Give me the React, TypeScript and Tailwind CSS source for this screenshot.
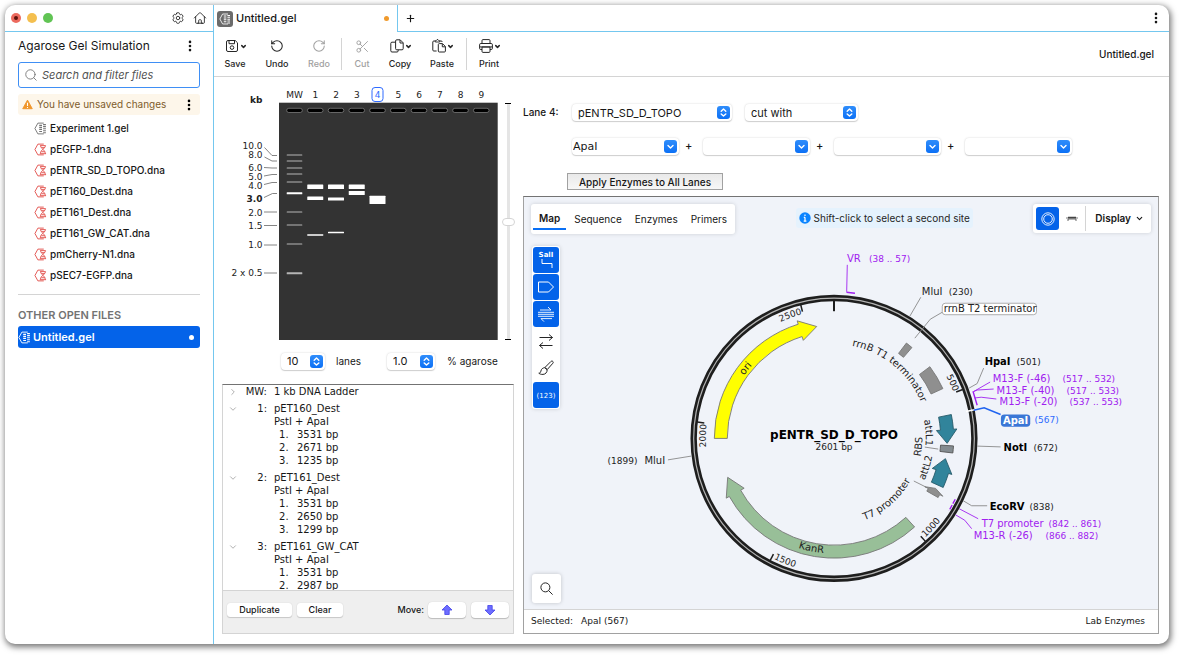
import type { ReactNode } from "react";
import { ChevronDown, ChevronRight, MoreVertical, Plus, RotateCcw, RotateCw, Scissors, Search } from "lucide-react";
import { HiOutlineCog6Tooth, HiOutlineHome } from "react-icons/hi2";

const FILES = [
  { name: "Experiment 1.gel", kind: "gel" },
  { name: "pEGFP-1.dna", kind: "dna" },
  { name: "pENTR_SD_D_TOPO.dna", kind: "dna" },
  { name: "pET160_Dest.dna", kind: "dna" },
  { name: "pET161_Dest.dna", kind: "dna" },
  { name: "pET161_GW_CAT.dna", kind: "dna" },
  { name: "pmCherry-N1.dna", kind: "dna" },
  { name: "pSEC7-EGFP.dna", kind: "dna" },
];

const LANES = [
  { id: 1, name: "pET160_Dest", fragments: [3531, 2671, 1235] },
  { id: 2, name: "pET161_Dest", fragments: [3531, 2650, 1299] },
  { id: 3, name: "pET161_GW_CAT", fragments: [3531, 2987] },
];

const LADDER = [
  { label: "10.0", text: 149, band: 155, lead: "M264.5 147.5L272 155.5H277" },
  { label: "8.0", text: 158, band: 161, lead: "M264.5 157L272 161H277" },
  { label: "6.0", text: 171, band: 168, lead: "M264 167.5L272 168H277" },
  { label: "5.0", text: 180, band: 174, lead: "M264 176L272 174.5H277" },
  { label: "4.0", text: 189, band: 182, lead: "M264 184.5L272 182.5H277" },
  { label: "3.0", text: 202, band: 193, lead: "M264 197.5L272.5 193.5H277", bold: true },
  { label: "2.0", text: 216, band: 212, lead: "M264 212H277" },
  { label: "1.5", text: 229, band: 225, lead: "M264 225.5H277" },
  { label: "1.0", text: 248, band: 244, lead: "M264 245H277" },
  { label: "2 x 0.5", text: 276, band: 273, lead: "M264 273H277", bright: true },
];

const BANDS = [
  { lane: 1, y: 184.5, h: 4.5 },
  { lane: 1, y: 196.5, h: 3.5 },
  { lane: 1, y: 234, h: 2, dim: true },
  { lane: 2, y: 184.5, h: 4.5 },
  { lane: 2, y: 197.5, h: 3 },
  { lane: 2, y: 231.7, h: 1.6 },
  { lane: 3, y: 184.5, h: 4.5 },
  { lane: 3, y: 191, h: 4 },
  { lane: 4, y: 195.7, h: 8.4 },
];

const laneX = (lane: number) => 294.5 + lane * 20.75;

// Plasmid geometry: angles in degrees, clockwise from twelve o'clock.
const CX = 834;
const CY = 439;
const LENGTH = 2601;

const toAngle = (bp: number) => (bp / LENGTH) * 360;

function pt(angle: number, r: number) {
  const a = (angle * Math.PI) / 180;
  return `${(CX + r * Math.sin(a)).toFixed(2)} ${(CY - r * Math.cos(a)).toFixed(2)}`;
}

function arc(from: number, to: number, r: number) {
  const large = Math.abs(to - from) > 180 ? 1 : 0;
  return `M${pt(from, r)}A${r} ${r} 0 ${large} ${to > from ? 1 : 0} ${pt(to, r)}`;
}

function block(from: number, to: number, inner = 107, outer = 120) {
  return `${arc(from, to, outer)}L${pt(to, inner)}A${inner} ${inner} 0 0 ${to > from ? 0 : 1} ${pt(from, inner)}Z`;
}

function arrow(from: number, neck: number, tip: number) {
  const sweep = tip > from ? 1 : 0;
  return [
    arc(from, neck, 120),
    `L${pt(neck, 123.5)}L${pt(tip, 113.5)}L${pt(neck, 103)}L${pt(neck, 107)}`,
    `A107 107 0 0 ${1 - sweep} ${pt(from, 107)}Z`,
  ].join("");
}

function IconHexFile({ kind, className }: { kind: string; className?: string }) {
  return (
    <svg viewBox="0 0 14 14" className={className} fill="none" stroke="currentColor" strokeWidth="1">
      <path d="M10.5 1.2H4.2L1 7l3.2 5.8h6.3" />
      {kind === "gel" ? (
        <path d="M5.6 3.6h3M5.6 5.8h3M5.6 8h3M5.6 10.2h3M9.8 2.8h3M9.8 5h3M9.8 7.2h3M9.8 9.4h3M9.8 11.6h3" strokeWidth="1.2" />
      ) : (
        <path d="M6.6 2.8h6M7 3c.3 3.6 5.3 4.4 5.3 8.4M12.4 3C12 6.4 7 7.1 6.8 11.2M6.4 11.5H13M8.2 5h3.4M8 9.4h3.6" />
      )}
    </svg>
  );
}

function IconSave() {
  return (
    <svg viewBox="0 0 16 16" className="size-4" fill="none" stroke="currentColor">
      <path d="M2.5 4A1.5 1.5 0 0 1 4 2.500h7.200l2.300 2.300V12a1.500 1.500 0 0 1-1.500 1.500H4A1.500 1.500 0 0 1 2.500 12z" />
      <path d="M5 2.7v3h5.500v-3" />
      <circle cx="8" cy="9.6" r="1.8" />
    </svg>
  );
}

function IconCopy() {
  return (
    <svg viewBox="0 0 16 16" className="size-4" fill="none" stroke="currentColor">
      <path d="M6.5 4.2H3A1.2 1.2 0 0 0 1.8 5.400v7.400A1.200 1.200 0 0 0 3 14h5a1.200 1.200 0 0 0 1.200-1.200v-1" />
      <path d="M6.6 3a1.200 1.200 0 0 1 1.200-1.200h3.400l3 3v5.800a1.200 1.200 0 0 1-1.200 1.200H7.800a1.200 1.200 0 0 1-1.200-1.200z" />
      <path d="M11 2v3h3" />
    </svg>
  );
}

function IconPaste() {
  return (
    <svg viewBox="0 0 16 16" className="size-4" fill="none" stroke="currentColor">
      <path d="M5.600 13H2.800a1 1 0 0 1-1-1V4a1 1 0 0 1 1-1H4M9 3h1.200a1 1 0 0 1 1 1" />
      <path d="M4.300 4V2.600h1L6 1.600h1l.7 1h1V4z" strokeWidth="0.9" />
      <path d="M7.300 6.600a1 1 0 0 1 1-1h3.200l2.900 2.900V13a1 1 0 0 1-1 1H8.300a1 1 0 0 1-1-1z" />
      <path d="M11.300 5.800v3h3" />
    </svg>
  );
}

function IconPrint() {
  return (
    <svg viewBox="0 0 16 16" className="size-4" fill="none" stroke="currentColor">
      <path d="M4 5.300V2.600a1 1 0 0 1 1-1h6a1 1 0 0 1 1 1v2.700" />
      <path d="M4 11.500H2.800a1.200 1.200 0 0 1-1.200-1.200V6.700a1.200 1.200 0 0 1 1.200-1.200h10.400a1.200 1.200 0 0 1 1.200 1.200v3.600a1.200 1.200 0 0 1-1.200 1.200H12" />
      <path d="M4 9h8v4.400a1 1 0 0 1-1 1H5a1 1 0 0 1-1-1zM2 8.900h12" />
    </svg>
  );
}

type ToolButtonProps = { label: string; icon: ReactNode; menu?: boolean; disabled?: boolean; width?: string };

function ToolButton({ label, icon, menu, disabled, width = "w-[42px]" }: ToolButtonProps) {
  return (
    <button disabled={disabled} className={`flex shrink-0 flex-col items-center gap-1 text-[9px] leading-3 font-medium text-neutral-800 disabled:text-neutral-400 ${width}`}>
      <span className="flex h-4 items-center">
        {icon}
        {menu && <ChevronDown className="size-[7px]" strokeWidth={5} />}
      </span>
      {label}
    </button>
  );
}

type MacSelectProps = { label: string; id?: string; options: string[]; combo?: boolean; className: string };

function MacSelect({ label, id, options, combo, className }: MacSelectProps) {
  return (
    <span className={`relative flex h-[17px] rounded bg-white shadow-[0_0_2px_rgba(0,0,0,0.18),0_1px_1px_rgba(0,0,0,0.15)] ${className}`}>
      <select id={id} aria-label={label} className={`h-full w-full appearance-none rounded bg-transparent pr-4 text-[11px] leading-4 outline-none ${combo ? "pl-px" : "pl-[6px]"}`}>
        {options.map((option) => (
          <option key={option}>{option}</option>
        ))}
      </select>
      <span className="pointer-events-none absolute top-[2px] right-[2px] flex size-[13px] items-center justify-center rounded-[3px] bg-gradient-to-b from-[#2f8dfb] to-[#0a70f5] text-white">
        <svg viewBox="0 0 13 13" className="size-[13px]" fill="none" stroke="currentColor" strokeWidth="1.4" strokeLinecap="round" strokeLinejoin="round">
          <path d={combo ? "M4 5.5L6.5 8L9 5.5" : "M4.2 5.2L6.5 3L8.8 5.2M4.2 7.9L6.5 10.1L8.8 7.9"} />
        </svg>
      </span>
    </span>
  );
}

function Sidebar() {
  return (
    <aside className="flex w-[209px] shrink-0 flex-col border-r border-[#74c7ef]">
      <div className="flex h-[27px] shrink-0 items-center border-b border-[#74c7ef] px-[6px]">
        <div className="flex flex-1 gap-[6px]">
          <span className="flex size-[10px] items-center justify-center rounded-full bg-[#ec6a5e]">
            <span className="size-1 rounded-full bg-[#5c120c]" />
          </span>
          <span className="size-[10px] rounded-full bg-[#f4bf4f]" />
          <span className="size-[10px] rounded-full bg-[#61c454]" />
        </div>
        <div className="flex gap-2 text-neutral-800">
          <button aria-label="Settings"><HiOutlineCog6Tooth className="size-[14px]" /></button>
          <button aria-label="Home"><HiOutlineHome className="size-[14px]" /></button>
        </div>
      </div>

      <div className="flex flex-col px-[13px] pt-1">
        <div className="flex h-5 items-center justify-between">
          <h1 className="text-xs whitespace-nowrap">Agarose Gel Simulation</h1>
          <button aria-label="Collection menu" className="mr-[3px]"><MoreVertical className="size-[14px]" strokeWidth={2.5} /></button>
        </div>
        <label className="mt-[6px] flex h-[26px] items-center gap-1 rounded-[3px] border border-[#3f8ff5] px-[5px]">
          <Search className="size-[14px] shrink-0 text-neutral-500" strokeWidth={1.5} />
          <input type="search" aria-label="Search and filter files" placeholder="Search and filter files" className="w-full min-w-0 text-[11px] italic outline-none placeholder:text-neutral-600" />
        </label>
        <div className="mt-[6px] flex h-[21px] items-center gap-1 rounded-[3px] bg-[#fdf6ea] px-1 text-[10px] text-[#7d5c2c]">
          <svg viewBox="0 0 12 12" className="size-[11px] shrink-0">
            <path d="M6 1.2L11.2 10.6H.8z" fill="#f0962b" stroke="#f0962b" strokeLinejoin="round" />
            <path d="M6 4.2v3.4M6 8.600v1.200" stroke="#fff" strokeWidth="1.2" />
          </svg>
          <span className="flex-1 whitespace-nowrap">You have unsaved changes</span>
          <button aria-label="Unsaved changes menu" className="text-black"><MoreVertical className="size-[14px]" strokeWidth={2.5} /></button>
        </div>
        <ul className="mt-[3px] text-[10px] font-medium">
          {FILES.map((file) => (
            <li key={file.name}>
              <a href="#" className="flex h-[21px] items-center gap-[3px] pl-4 whitespace-nowrap">
                <IconHexFile kind={file.kind} className={`size-[13px] ${file.kind === "gel" ? "text-neutral-500" : "text-[#e2504c]"}`} />
                {file.name}
              </a>
            </li>
          ))}
        </ul>
        <hr className="mt-2 border-neutral-300" />
        <h2 className="mt-3 text-[11px] leading-4 font-semibold text-neutral-500">OTHER OPEN FILES</h2>
        <a href="#" className="mt-[3px] flex h-[22px] items-center gap-[2px] rounded-[3px] bg-[#0463e9] pr-[6px] text-[11px] font-semibold text-white">
          <IconHexFile kind="gel" className="size-[13px]" />
          <span className="flex-1">Untitled.gel</span>
          <span className="size-[5px] rounded-full bg-white" />
        </a>
      </div>
    </aside>
  );
}

function TopBar() {
  return (
    <>
      <div className="flex h-[27px] shrink-0">
        <div className="flex w-[184px] items-center gap-[3px] border-r border-[#74c7ef] pr-2 pl-[3px] text-[11px] font-medium">
          <span className="flex size-4 items-center justify-center rounded-[3px] bg-[#6b6b6b] text-white">
            <IconHexFile kind="gel" className="size-3" />
          </span>
          <span className="flex-1">Untitled.gel</span>
          <span className="size-[5px] rounded-full bg-[#f09a2c]" />
        </div>
        <div className="flex flex-1 items-center justify-between border-b border-[#74c7ef] pr-[6px] pl-[7px]">
          <button aria-label="New tab"><Plus className="size-[11px]" strokeWidth={2.5} /></button>
          <button aria-label="Window menu"><MoreVertical className="size-[14px]" strokeWidth={2.5} /></button>
        </div>
      </div>
      <div className="flex h-[45px] shrink-0 items-center border-b border-neutral-300">
        <ToolButton label="Save" icon={<IconSave />} menu />
        <ToolButton label="Undo" icon={<RotateCcw className="size-[14px]" strokeWidth={1.8} />} />
        <ToolButton label="Redo" icon={<RotateCw className="size-[14px]" strokeWidth={1.8} />} disabled />
        <span className="mx-px h-8 w-px bg-neutral-300" />
        <ToolButton label="Cut" icon={<Scissors className="size-[15px]" strokeWidth={1.5} />} disabled width="w-[38px]" />
        <ToolButton label="Copy" icon={<IconCopy />} menu width="w-[38px]" />
        <ToolButton label="Paste" icon={<IconPaste />} menu width="w-[46px]" />
        <span className="mx-px h-8 w-px bg-neutral-300" />
        <ToolButton label="Print" icon={<IconPrint />} menu />
        <span className="flex-1 pr-[15px] text-right text-[10px] font-medium">Untitled.gel</span>
      </div>
    </>
  );
}

function Gel() {
  return (
    <svg viewBox="222 84 276 256" className="h-[256px] w-[276px] shrink-0 font-['DejaVu_Sans'] text-[9px]" fill="#222">
      <rect x="279" y="102.7" width="218.7" height="237.3" fill="#333" />
      <text x="262.5" y="103" textAnchor="end" fontWeight="bold">kb</text>
      <text x="294.5" y="98" textAnchor="middle">MW</text>
      <rect x="372" y="87.5" width="11" height="14" rx="3" fill="#fff" stroke="#2f6bff" />
      {[1, 2, 3, 4, 5, 6, 7, 8, 9].map((lane) => (
        <text key={lane} x={laneX(lane)} y="98" textAnchor="middle" fill={lane === 4 ? "#2f6bff" : "#222"}>{lane}</text>
      ))}
      {[0, 1, 2, 3, 4, 5, 6, 7, 8, 9].map((lane) => (
        <rect key={lane} x={laneX(lane) - 7.8} y="108.3" width="15.6" height="4.2" rx="2.1" fill="#000" stroke="#888" strokeWidth="0.7" />
      ))}
      {LADDER.map((step) => (
        <g key={step.label}>
          <text x="262.5" y={step.text} textAnchor="end" fontWeight={step.bold ? "bold" : "normal"}>{step.label}</text>
          <path d={step.lead} fill="none" stroke="#666" strokeWidth="0.8" />
          <rect
            x={laneX(0) - 7.8}
            y={step.band - 0.8}
            width="15.6"
            height={step.bold || step.bright ? 2 : 1.6}
            rx="0.5"
            fill={step.bold ? "#fff" : step.bright ? "#b5b5b5" : "#8a8a8a"}
          />
        </g>
      ))}
      {BANDS.map((band) => (
        <rect key={`${band.lane}-${band.y}`} x={laneX(band.lane) - 8} y={band.y} width="16" height={band.h} rx="0.5" fill={band.dim ? "#ccc" : "#fff"} />
      ))}
    </svg>
  );
}

function LaneList() {
  return (
    <div className="flex min-h-0 flex-1 flex-col border border-neutral-300 border-t-neutral-500">
      <div className="min-h-0 flex-1 overflow-hidden font-['DejaVu_Sans'] text-[10px] leading-[13px] whitespace-nowrap">
        <div className="flex">
          <button aria-label="Expand MW" className="flex w-5 items-center justify-center text-neutral-400"><ChevronRight className="size-[10px]" /></button>
          <span className="w-6 text-right">MW:</span>
          <span className="pl-[7px]">1 kb DNA Ladder</span>
        </div>
        {LANES.map((lane) => (
          <div key={lane.id} className="mt-1 flex items-start">
            <button aria-label={`Collapse lane ${lane.id}`} className="flex h-[13px] w-5 items-center justify-center text-neutral-400"><ChevronDown className="size-[10px]" /></button>
            <span className="w-6 text-right">{lane.id}:</span>
            <div className="pl-[7px]">
              <p>{lane.name}</p>
              <p>PstI + ApaI</p>
              <ol>
                {lane.fragments.map((bp, i) => (
                  <li key={bp} className="flex pl-[5px]">
                    <span className="w-[18px]">{i + 1}.</span>
                    {bp} bp
                  </li>
                ))}
              </ol>
            </div>
          </div>
        ))}
      </div>
      <div className="flex h-[43px] shrink-0 items-center border-t border-neutral-300 bg-[#efefef] px-1 pb-1 text-[9px] font-medium">
        <button className="h-[14px] w-[65px] rounded-[3px] bg-white shadow-[0_0_1px_rgba(0,0,0,0.2),0_1px_1px_rgba(0,0,0,0.15)]">Duplicate</button>
        <button className="ml-[5px] h-[14px] w-[46px] rounded-[3px] bg-white shadow-[0_0_1px_rgba(0,0,0,0.2),0_1px_1px_rgba(0,0,0,0.15)]">Clear</button>
        <span className="mr-1 ml-auto">Move:</span>
        {["up", "down"].map((dir) => (
          <button key={dir} aria-label={`Move ${dir}`} className="mr-[5px] flex h-4 w-[38px] items-center justify-center rounded bg-white shadow-[0_0_1px_rgba(0,0,0,0.2),0_1px_1px_rgba(0,0,0,0.2)] last:mr-0">
            <svg viewBox="0 0 12 12" className={dir === "up" ? "size-3" : "size-3 rotate-180"}>
              <path d="M6 1L11 6H8.200V10.500H3.800V6H1z" fill="#6d6dff" stroke="#4343e8" strokeWidth="0.8" />
            </svg>
          </button>
        ))}
      </div>
    </div>
  );
}

const ARC_LABELS = [
  { id: "t1", text: "rrnB T1 terminator", d: arc(11, 90, 94.5), feature: true },
  { id: "attl1", text: "attL1", d: arc(78.5, 120, 92), feature: true },
  { id: "rbs", text: "RBS", d: arc(102, 60, 88.5), feature: true },
  { id: "attl2", text: "attL2", d: arc(115, 70, 100), feature: true },
  { id: "t7", text: "T7 promoter", d: arc(159.5, 90, 87.5), feature: true },
  { id: "ori", text: "ori", d: arc(305, 340, 110), feature: true },
  { id: "kanr", text: "KanR", d: arc(198, 150, 115.5), feature: true },
  { id: "k10", text: "1000", d: arc(toAngle(1000) - 1, 90, 135) },
  { id: "k15", text: "1500", d: arc(toAngle(1500) - 1, 150, 135) },
];

const TOP_TICK_LABELS = [
  { id: "k5", text: "500", d: arc(30, toAngle(500) - 0.5, 128.5) },
  { id: "k20", text: "2000", d: arc(240, toAngle(2000) - 0.5, 128.5) },
  { id: "k25", text: "2500", d: arc(300, toAngle(2500) - 0.5, 128.5) },
];

const SITES = [
  { name: "MluI", pos: "(230)", x: 922, px: 949, y: 295, lead: "M921 297.5L910 316.5" },
  { name: "HpaI", pos: "(501)", x: 985, px: 1017, y: 365, bold: true, lead: "M984 368.5L977.5 384L969.5 388.5" },
  { name: "NotI", pos: "(672)", x: 1004, px: 1034, y: 452, bold: true, lead: "M977.5 446.7L1001 447.5" },
  { name: "EcoRV", pos: "(838)", x: 990, px: 1030, y: 511, bold: true, lead: "M963.5 501.5L972 506.5H987.5" },
  { name: "MluI", pos: "(1899)", x: 644, px: 607, y: 465, lead: "M667.5 460.5L691 456.7" },
];

const PRIMERS = [
  { name: "VR", pos: "(38 .. 57)", x: 847, px: 869, y: 262, lead: "M847.3 265L846.7 292" },
  { name: "M13-F (-46)", pos: "(517 .. 532)", x: 993, px: 1063, y: 382, lead: "M990.5 382.5L974 392" },
  { name: "M13-F (-40)", pos: "(517 .. 533)", x: 997, px: 1067, y: 394, lead: "M994 389.5L977.5 390.5L974 392" },
  { name: "M13-F (-20)", pos: "(537 .. 553)", x: 1000, px: 1070, y: 406, lead: "M996.7 399.5L981.5 397.7L975 398.5" },
  { name: "T7 promoter", pos: "(842 .. 861)", x: 982, px: 1049, y: 528, lead: "M959.5 509.5L978.5 519.5" },
  { name: "M13-R (-26)", pos: "(866 .. 882)", x: 974, px: 1046, y: 540, lead: "M956 515.7L965 521L972 529.5" },
];

function PlasmidMap() {
  return (
    <svg viewBox="524 197 634 413" className="h-full w-full font-['DejaVu_Sans'] text-[9px]" fill="#222">
      <circle cx={CX} cy={CY} r="140.7" fill="none" stroke="#1e1e1e" strokeWidth="6.4" />
      <circle cx={CX} cy={CY} r="140.7" fill="none" stroke="#b4b4b4" strokeWidth="1.2" />
      <path d={`M${pt(toAngle(567), 135)}L${pt(toAngle(567), 146)}`} stroke="#fff" strokeWidth="1.6" />
      <path d={`M${pt(0, 138)}L${pt(0, 127.5)}`} stroke="#1e1e1e" strokeWidth="2" />
      {[500, 1000, 1500, 2000, 2500].map((bp) => (
        <path key={bp} d={`M${pt(toAngle(bp), 138)}L${pt(toAngle(bp), 131)}`} stroke="#1e1e1e" strokeWidth="1.5" />
      ))}

      <g strokeWidth="0.9" stroke="#777">
        <path d={arrow(270, 342.6, 351.2)} fill="#ffff00" />
        <path d={arrow(137.7, 241, 249.9)} fill="#98bf98" />
        <path d={arrow(78.5, 85.6, 92.5)} fill="#31849b" stroke="#275b6a" />
        <path d={arrow(114.2, 107, 100.3)} fill="#31849b" stroke="#275b6a" />
        <path d={arrow(119.6, 118, 116.2)} fill="#8f8f8f" />
        <path d={block(93.6, 97)} fill="#848c90" stroke="#555" />
        <path d={block(37.2, 40.6)} fill="#8f8f8f" />
        <path d={block(53.2, 65.4)} fill="#8f8f8f" />
      </g>

      {ARC_LABELS.map((label) => (
        <g key={label.id}>
          <path id={label.id} d={label.d} fill="none" />
          <text className={label.feature ? "text-[10px]" : undefined}><textPath href={`#${label.id}`}>{label.text}</textPath></text>
        </g>
      ))}
      {TOP_TICK_LABELS.map((label) => (
        <g key={label.id}>
          <path id={label.id} d={label.d} fill="none" />
          <text textAnchor="end"><textPath href={`#${label.id}`} startOffset="100%">{label.text}</textPath></text>
        </g>
      ))}

      <g fill="none" stroke="#888" strokeWidth="0.9">
        <path d="M942.5 312.5L930.5 319.5L915 338.5" />
        <path d="M925 447.7L938.5 449.7M914 481.7L926 487.7" />
      </g>
      <rect x="942.5" y="303.500" width="94.5" height="11.5" rx="3" fill="#fff" stroke="#999" strokeWidth="0.8" />
      <text x="944" y="312.5" className="text-[10px]">rrnB T2 terminator</text>

      {SITES.map((site) => (
        <g key={site.pos}>
          <path d={site.lead} fill="none" stroke="#888" strokeWidth="0.9" />
          <text x={site.x} y={site.y} fill={site.bold ? "#000" : "#222"} className={site.bold ? "text-[10px] font-bold" : "text-[10px]"}>{site.name}</text>
          <text x={site.px} y={site.y}>{site.pos}</text>
        </g>
      ))}

      <g fill="#a020f0">
        {PRIMERS.map((primer) => (
          <g key={primer.name}>
            <path d={primer.lead} fill="none" stroke="#a020f0" strokeWidth="0.9" />
            <text x={primer.x} y={primer.y} className="text-[10px]">{primer.name}</text>
            <text x={primer.px} y={primer.y}>{primer.pos}</text>
          </g>
        ))}
        <g fill="none" stroke="#a020f0" strokeWidth="1.4">
          <path d="M846.5 292.500L855 293.5M973.3 391.7L977.5 405.7" />
          <path d="M955.5 500L949.3 511.5" strokeDasharray="5 1.5" />
        </g>
      </g>

      <path d="M974 410.7L984.5 408.3L1001 415" fill="none" stroke="#1f63f0" strokeWidth="1.5" />
      <rect x="1001.3" y="415" width="29.4" height="12.3" rx="3.5" fill="#3a76d6" />
      <text x="1016" y="424.5" textAnchor="middle" fill="#fff" className="text-[10px] font-bold">ApaI</text>
      <text x="1035" y="424" fill="#2f6bff">(567)</text>

      <text x={CX} y="439.5" textAnchor="middle" fill="#000" className="text-xs font-bold">pENTR_SD_D_TOPO</text>
      <text x={CX} y="450.5" textAnchor="middle">2601 bp</text>
    </svg>
  );
}

const MAP_TOOLS = [
  { label: "Show enzymes", active: true, art: <><text x="13" y="10" textAnchor="middle" className="text-[7px] font-bold" fill="currentColor" stroke="none">SalI</text><path d="M9 12v4.500h10V21" /></> },
  { label: "Show features", active: true, art: <path d="M5.500 8h10l5 5-5 5h-10z" /> },
  { label: "Show primers", active: true, art: <path d="M5 11.300h16M5 13.300h16M5 15.300h16M7 9h11l-3-3M19 17.600H8l3 3" strokeWidth="0.9" /> },
  { label: "Show translations", active: false, art: <path d="M6.500 9.500h13L16 6.500M19.500 9.500l-3.500 3M19.500 17.500h-13l3.500-3M6.500 17.500l3.500 3" /> },
  { label: "Colours", active: false, art: <path d="M19.500 6.200c.8.5 1 1.200.4 2l-5.600 6.300-2.400-2 6-6c.5-.5 1.100-.6 1.600-.3zM11.700 12.700l2.400 2c.2 2.500-1.500 4.600-4.100 4.700-1.700.1-3-.3-4.200-1.200 1.500-.1 1.800-.9 2.100-2.200.4-1.900 1.800-3.200 3.800-3.300z" /> },
  { label: "Show numbering", active: true, art: <text x="13" y="16" textAnchor="middle" className="text-[7px]" fill="currentColor" stroke="none">(123)</text> },
];

function MapPanel() {
  return (
    <section className="mt-[6px] flex min-h-0 flex-1 flex-col border border-neutral-400 border-t-neutral-500">
      <div className="relative min-h-0 flex-1 bg-[#f0f3f9]">
        <PlasmidMap />
        <div className="absolute inset-x-[7px] top-[7px] flex items-start justify-between">
          <nav className="flex h-[30px] items-center rounded-[3px] bg-white px-[2px] text-[10px] shadow-[0_0_4px_rgba(0,0,0,0.15)]">
            <button className="flex h-[26px] items-center self-start border-b-2 border-[#0a70f5] px-[6px] pt-1 font-semibold">Map</button>
            <button className="pr-[6px] pl-2">Sequence</button>
            <button className="px-[7px]">Enzymes</button>
            <button className="px-[6px]">Primers</button>
          </nav>
          <p className="mt-1 flex h-5 items-center gap-[3px] rounded-[3px] bg-[#e5f2fd] px-[3px] text-[10px] text-neutral-800">
            <svg viewBox="0 0 12 12" className="size-3">
              <circle cx="6" cy="6" r="5.7" fill="#0a84ff" />
              <path d="M6 2.6v1.500M6 5.200v3.900M4.800 5.400H6M4.700 9.100h2.700" stroke="#fff" strokeWidth="1.2" />
            </svg>
            Shift-click to select a second site
          </p>
          <div className="flex h-[29px] items-center rounded-[3px] bg-white pr-[7px] pl-[3px] shadow-[0_0_4px_rgba(0,0,0,0.15)]">
            <button aria-label="Circular map" className="flex size-[23px] items-center justify-center rounded-[3px] bg-[#0463e9] text-white">
              <svg viewBox="0 0 16 16" className="size-4" fill="none" stroke="currentColor" strokeWidth="0.9">
                <circle cx="8" cy="8" r="6.2" />
                <circle cx="8" cy="8" r="4.3" />
              </svg>
            </button>
            <button aria-label="Linear map" className="mx-[6px]">
              <svg viewBox="0 0 14 8" className="h-2 w-[14px]" fill="none" stroke="#444">
                <path d="M1 3h12" strokeWidth="0.7" />
                <path d="M3 2.5h8" strokeWidth="1.6" />
                <path d="M3 6V4h8v2" strokeWidth="0.8" />
              </svg>
            </button>
            <span className="h-[25px] w-px bg-neutral-300" />
            <button className="ml-[9px] flex items-center gap-1 text-[10px] font-semibold">
              Display <ChevronDown className="size-[9px]" strokeWidth={3} />
            </button>
          </div>
        </div>
        <div className="absolute top-[49px] left-2 flex flex-col gap-px rounded-[3px] bg-white p-px shadow-[0_0_4px_rgba(0,0,0,0.15)]">
          {MAP_TOOLS.map((tool) => (
            <button key={tool.label} aria-label={tool.label} className={`size-[26px] rounded-[3px] ${tool.active ? "bg-[#0463e9] text-white" : "text-neutral-800"}`}>
              <svg viewBox="0 0 26 26" className="size-[26px] font-['DejaVu_Sans']" fill="none" stroke="currentColor">{tool.art}</svg>
            </button>
          ))}
        </div>
        <button aria-label="Find" className="absolute bottom-[6px] left-2 flex size-[29px] items-center justify-center rounded-[3px] bg-white shadow-[0_0_4px_rgba(0,0,0,0.2)]">
          <svg viewBox="0 0 16 16" className="size-[15px]" fill="none" stroke="currentColor">
            <circle cx="6.8" cy="6.8" r="4.800" />
            <path d="M10.3 10.3L14.500 14.5" />
          </svg>
        </button>
      </div>
      <footer className="flex h-6 shrink-0 items-center justify-between border-t border-neutral-300 pr-[13px] pl-[7px] font-['DejaVu_Sans'] text-[9px]">
        <span className="flex gap-2">
          <span>Selected:</span>
          <span>ApaI (567)</span>
        </span>
        <span>Lab Enzymes</span>
      </footer>
    </section>
  );
}

export default function App() {
  return (
    <div className="h-screen bg-white pt-[5px] pr-[11px] pb-[11px] pl-[5px] font-['Inter',sans-serif] text-neutral-900">
      <div className="flex h-full overflow-hidden rounded-[10px] bg-white shadow-[1px_2px_6px_1px_rgba(0,0,0,0.55)]">
        <Sidebar />
        <main className="flex min-w-0 flex-1 flex-col">
          <TopBar />
          <div className="flex min-h-0 flex-1 pr-[10px] pb-[10px] pl-2">
            <div className="mr-[9px] flex w-[292px] shrink-0 flex-col pt-[7px]">
              <div className="flex items-end">
                <Gel />
                <div className="ml-[3px] flex h-[237px] w-[14px] flex-col items-center">
                  <span className="h-px w-[6px] shrink-0 bg-black" />
                  <input
                    type="range"
                    aria-label="Migration distance"
                    defaultValue={50}
                    className="min-h-0 w-[14px] flex-1 appearance-none bg-transparent [writing-mode:vertical-lr] [&::-webkit-slider-runnable-track]:w-[3px] [&::-webkit-slider-runnable-track]:bg-neutral-200 [&::-webkit-slider-thumb]:-ml-[5px] [&::-webkit-slider-thumb]:h-2 [&::-webkit-slider-thumb]:w-[13px] [&::-webkit-slider-thumb]:appearance-none [&::-webkit-slider-thumb]:rounded-full [&::-webkit-slider-thumb]:border [&::-webkit-slider-thumb]:border-neutral-300 [&::-webkit-slider-thumb]:bg-white"
                  />
                  <span className="h-px w-[6px] shrink-0 bg-black" />
                </div>
              </div>
              <div className="mt-3 mb-[14px] flex h-[18px] shrink-0 items-center pl-[59px] text-[10px]">
                <MacSelect label="Number of lanes" id="lanes" options={["10"]} className="w-[44px]" />
                <label htmlFor="lanes" className="ml-[11px]">lanes</label>
                <MacSelect label="Percent agarose" id="agarose" options={["1.0"]} className="ml-[26px] w-[48px]" />
                <label htmlFor="agarose" className="ml-3">% agarose</label>
              </div>
              <LaneList />
            </div>

            <div className="flex min-w-0 flex-1 flex-col pt-[27px]">
              <div className="flex h-[17px] items-center">
                <label htmlFor="sequence" className="w-[49px] text-[10px] font-medium">Lane 4:</label>
                <MacSelect label="Sequence" id="sequence" options={["pENTR_SD_D_TOPO"]} className="w-[160px]" />
                <MacSelect label="Operation" options={["cut with"]} className="ml-[13px] w-[113px]" />
              </div>
              <div className="mt-[17px] flex h-[17px] items-center pl-[49px]">
                {["ApaI", "", "", ""].map((enzyme, i) => (
                  <span key={i} className="flex items-center text-[11px] font-medium">
                    {i > 0 && <span className="w-6 pl-[6px]">+</span>}
                    <MacSelect label={`Enzyme ${i + 1}`} options={[enzyme]} combo className="w-[107px] font-['DejaVu_Sans']" />
                  </span>
                ))}
              </div>
              <button className="mt-[18px] ml-11 h-[17px] w-[156px] border border-neutral-400 bg-gradient-to-b from-[#e9e9e9] to-[#f7f7f7] text-[10px] leading-[14px] font-medium">
                Apply Enzymes to All Lanes
              </button>
              <MapPanel />
            </div>
          </div>
        </main>
      </div>
    </div>
  );
}
